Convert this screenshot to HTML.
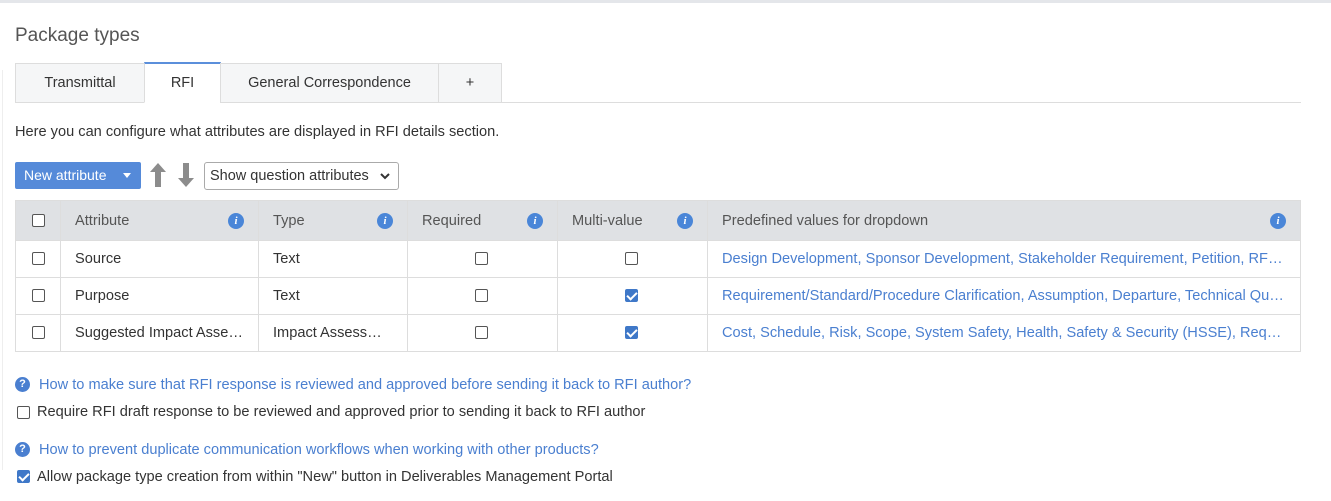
<!DOCTYPE html>
<html><head><style>
*{box-sizing:border-box;margin:0;padding:0}
body{width:1331px;height:501px;background:#fff;font-family:"Liberation Sans",sans-serif;color:#333;font-size:14.6px;position:relative;overflow:hidden}
.abs{position:absolute}
.topbar{left:0;top:0;width:1331px;height:3px;background:#e4e6ea}
h1{position:absolute;left:15px;top:25px;font-size:19px;font-weight:normal;color:#555}
.tab{position:absolute;top:63px;height:40px;border:1px solid #ddd;background:#f5f6f7;text-align:center;line-height:38px;font-size:14.5px;color:#333}
.cb{position:absolute;width:13px;height:13px;border:1px solid #555;border-radius:2px;background:#fff}
.cbc{background:#3f78c8;border-color:#3f78c8}
.cbc:after{content:"";position:absolute;left:3px;top:0px;width:4px;height:8px;border:solid #fff;border-width:0 2px 2px 0;transform:rotate(45deg)}
table{position:absolute;left:15px;top:200px;border-collapse:collapse;width:1286px;table-layout:fixed}
td,th{border:1px solid #ddd;height:37px;padding:0 14px;white-space:nowrap;overflow:hidden;text-overflow:ellipsis;font-weight:normal;text-align:left;position:relative}
th{background:#dfe1e4;height:40px;color:#555}
.i{position:absolute;right:14px;top:12px;width:16px;height:16px;border-radius:50%;background:#4a86d8;color:#fff;font-size:11px;font-weight:bold;font-style:italic;text-align:center;line-height:16px;font-family:"Liberation Serif",serif}
.lnk{color:#4a7fd0}
.q{position:absolute;width:15px;height:15px;border-radius:50%;background:#4a7fd0;color:#fff;font-size:11px;font-weight:bold;text-align:center;line-height:15px}
</style></head><body>
<div class="abs topbar"></div>
<div class="abs" style="left:2px;top:70px;width:1px;height:400px;background:#eee"></div>
<h1>Package types</h1>
<div class="tab" style="left:15px;width:130px">Transmittal</div>
<div class="tab" style="left:144px;width:77px;background:#fff;border-top:2px solid #5b8fdb;border-bottom-color:#fff;top:62px;height:41px">RFI</div>
<div class="tab" style="left:220px;width:219px">General Correspondence</div>
<div class="tab" style="left:438px;width:64px">+</div>
<div class="abs" style="left:502px;top:102px;width:799px;height:1px;background:#ddd"></div>
<div class="abs" style="left:15px;top:124px">Here you can configure what attributes are displayed in RFI details section.</div>
<div class="abs" style="left:15px;top:162px;width:126px;height:27px;background:#558ad9;color:#fff;border-radius:2px;font-size:14px;line-height:27px;padding-left:9px">New attribute<span style="position:absolute;left:108px;top:11px;border:4px solid transparent;border-top:5px solid #fff;border-bottom:0"></span></div>
<svg class="abs" style="left:149px;top:162px" width="18" height="26"><path d="M9 1 L17 10 H12 V25 H6 V10 H1 Z" fill="#8c8c8c"/></svg>
<svg class="abs" style="left:177px;top:162px" width="18" height="26"><path d="M9 25 L17 16 H12 V1 H6 V16 H1 Z" fill="#8c8c8c"/></svg>
<div class="abs" style="left:204px;top:162px;width:195px;height:28px;border:1px solid #aaa;border-radius:3px;line-height:26px;padding-left:5px;font-size:14.5px">Show question attributes<svg style="position:absolute;right:8px;top:10px" width="10" height="7"><path d="M1 1 L5 5 L9 1" stroke="#333" stroke-width="2" fill="none"/></svg></div>
<table>
<colgroup><col style="width:45px"><col style="width:198px"><col style="width:149px"><col style="width:150px"><col style="width:150px"><col></colgroup>
<tr><th><span class="cb" style="left:16px;top:13px"></span></th><th>Attribute<span class="i">i</span></th><th>Type<span class="i">i</span></th><th>Required<span class="i">i</span></th><th>Multi-value<span class="i">i</span></th><th>Predefined values for dropdown<span class="i">i</span></th></tr>
<tr><td><span class="cb" style="left:16px;top:11px"></span></td><td>Source</td><td>Text</td><td><span class="cb" style="left:67px;top:11px"></span></td><td><span class="cb" style="left:67px;top:11px"></span></td><td class="lnk">Design Development, Sponsor Development, Stakeholder Requirement, Petition, RFI/Design Query, Other</td></tr>
<tr><td><span class="cb" style="left:16px;top:11px"></span></td><td>Purpose</td><td>Text</td><td><span class="cb" style="left:67px;top:11px"></span></td><td><span class="cb cbc" style="left:67px;top:11px"></span></td><td class="lnk">Requirement/Standard/Procedure Clarification, Assumption, Departure, Technical Query, Other</td></tr>
<tr><td><span class="cb" style="left:16px;top:11px"></span></td><td>Suggested Impact Assessment</td><td>Impact Assessment</td><td><span class="cb" style="left:67px;top:11px"></span></td><td><span class="cb cbc" style="left:67px;top:11px"></span></td><td class="lnk">Cost, Schedule, Risk, Scope, System Safety, Health, Safety &amp; Security (HSSE), Requirements</td></tr>
</table>
<span class="q" style="left:15px;top:377px">?</span>
<div class="abs lnk" style="left:39px;top:377px">How to make sure that RFI response is reviewed and approved before sending it back to RFI author?</div>
<span class="cb" style="left:17px;top:406px"></span>
<div class="abs" style="left:37px;top:404px">Require RFI draft response to be reviewed and approved prior to sending it back to RFI author</div>
<span class="q" style="left:15px;top:442px">?</span>
<div class="abs lnk" style="left:39px;top:442px">How to prevent duplicate communication workflows when working with other products?</div>
<span class="cb cbc" style="left:17px;top:470px"></span>
<div class="abs" style="left:37px;top:469px">Allow package type creation from within "New" button in Deliverables Management Portal</div>
</body></html>
